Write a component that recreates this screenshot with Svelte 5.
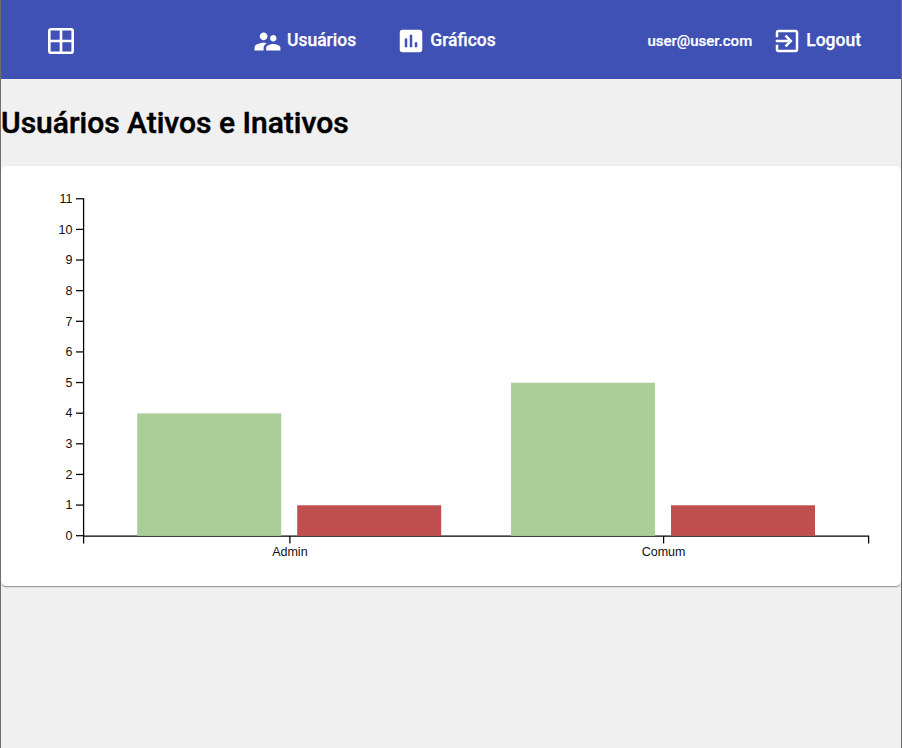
<script>
  const ticks = [0, 1, 2, 3, 4, 5, 6, 7, 8, 9, 10, 11];
  const baseline = 369.9;
  const axisY = 370.1;
  const step = 30.63;
  const barWidth = 144;
  const groups = [
    { label: 'Admin', x: 136.2, center: 288.9, active: 4, inactive: 1 },
    { label: 'Comum', x: 510, center: 662.6, active: 5, inactive: 1 }
  ];
  const y = (n) => baseline - n * step;
</script>

<div class="app">
  <header>
    <a class="home" href="#home" aria-label="Home">
      <svg width="26" height="26" viewBox="0 0 26 26">
        <rect x="1.3" y="1.3" width="23.4" height="23.4" rx="1.8" />
        <path d="M13 1v24M1 13h24" />
      </svg>
    </a>
    <nav>
      <a class="link" href="#usuarios">
        <svg class="icon people" viewBox="0 0 24 24"><path d="M16.5 12c1.38 0 2.49-1.12 2.49-2.5S17.88 7 16.5 7C15.12 7 14 8.12 14 9.5s1.12 2.5 2.5 2.5zM9 11c1.66 0 2.99-1.34 2.99-3S10.66 5 9 5C7.34 5 6 6.34 6 8s1.34 3 3 3zm7.5 3c-1.83 0-5.5.92-5.5 2.75V19h11v-2.25c0-1.83-3.67-2.75-5.5-2.75zM9 13c-2.33 0-7 1.17-7 3.5V19h7v-2.25c0-.85.33-2.34 2.37-3.47C10.5 13.1 9.66 13 9 13z" /></svg>
        <span>Usuários</span>
      </a>
      <a class="link graphs" href="#graficos">
        <svg class="icon" viewBox="0 0 24 24"><path d="M19 3H5c-1.1 0-2 .9-2 2v14c0 1.100.9 2 2 2h14c1.100 0 2-.9 2-2V5c0-1.100-.9-2-2-2zM9 17H7v-7h2v7zm4 0h-2V7h2v10zm4 0h-2v-4h2v4z" /></svg>
        <span>Gráficos</span>
      </a>
    </nav>
    <span class="email">user@user.com</span>
    <a class="link logout" href="#logout">
      <svg class="icon" viewBox="0 0 24 24"><path d="M10.090 15.590L11.500 17l5-5-5-5-1.410 1.410L12.670 11H3v2h9.670l-2.580 2.590zM19 3H5c-1.110 0-2 .9-2 2v4h2V5h14v14H5v-4H3v4c0 1.100.89 2 2 2h14c1.100 0 2-.9 2-2V5c0-1.100-.9-2-2-2z" /></svg>
      <span>Logout</span>
    </a>
  </header>

  <h1>Usuários Ativos e Inativos</h1>

  <section class="card">
    <svg class="chart" width="900" height="420" viewBox="0 0 900 420">
      {#each ticks as t}
        <path class="axis" d="M75 {y(t) - 0.2}H82.600" />
        <text x="71.500" y={Math.round(y(t) + 4.1)} text-anchor="end">{t}</text>
      {/each}
      <path class="axis" d="M82.600 {y(11) - 0.6}V{axisY}" />
      <path class="axis" d="M82.600 377.500V{axisY}H867.600V377.500" />
      {#each groups as g}
        <path class="axis" d="M{g.center} {axisY}V377.500" />
        <rect class="active" x={g.x} y={y(g.active)} width={barWidth} height={g.active * step} />
        <rect class="inactive" x={g.x + 160} y={y(g.inactive)} width={barWidth} height={g.inactive * step} />
        <text x={g.center} y="390" text-anchor="middle">{g.label}</text>
      {/each}
    </svg>
  </section>
</div>

<style>
  .app {
    box-sizing: border-box;
    width: 902px;
    height: 748px;
    border: solid #6e6e6e;
    border-width: 0 1px;
    background: #f0f0f0;
    font-family: Roboto, "Liberation Sans", sans-serif;
    overflow: hidden;
  }
  header {
    box-sizing: border-box;
    display: flex;
    align-items: center;
    height: 79px;
    padding: 0 40px 0 47px;
    background: #3f51b5;
    color: #fff;
  }
  a { color: inherit; text-decoration: none; }
  .home { display: flex; margin-top: 3px; }
  .home svg { fill: none; stroke: #fff; stroke-width: 2.6; }
  nav { display: flex; margin-left: 177.5px; }
  .link {
    display: flex;
    align-items: center;
    gap: 4.5px;
    font-size: 17.5px;
    font-weight: 500;
    white-space: nowrap;
    -webkit-text-stroke: 0.25px #fff;
  }
  .graphs { margin-left: 40px; gap: 4px; }
  .icon { width: 30px; height: 30px; margin-top: 3px; fill: #fff; flex: none; }
  .people { width: 31px; height: 31px; }
  .logout { gap: 4px; }
  .email {
    margin: 3px 20px 0 auto;
    font-size: 15px;
    font-weight: 500;
    -webkit-text-stroke: 0.2px #fff;
  }
  h1 {
    margin: 0;
    height: 87px;
    line-height: 87px;
    font-size: 30px;
    font-weight: 500;
    color: #000;
    -webkit-text-stroke: 0.5px #000;
  }
  .card {
    height: 420px;
    background: #fff;
    border-radius: 5px;
    box-shadow: 0 2px 1px -1px rgba(0, 0, 0, .2), 0 1px 1px rgba(0, 0, 0, .14), 0 1px 3px rgba(0, 0, 0, .12);
  }
  .chart { display: block; }
  .axis { fill: none; stroke: #000; stroke-width: 1.25; }
  .active { fill: #abce99; }
  .inactive { fill: #c04f4f; }
  text { font: 12.5px "Liberation Sans", Arial, sans-serif; fill: #111; }
</style>
